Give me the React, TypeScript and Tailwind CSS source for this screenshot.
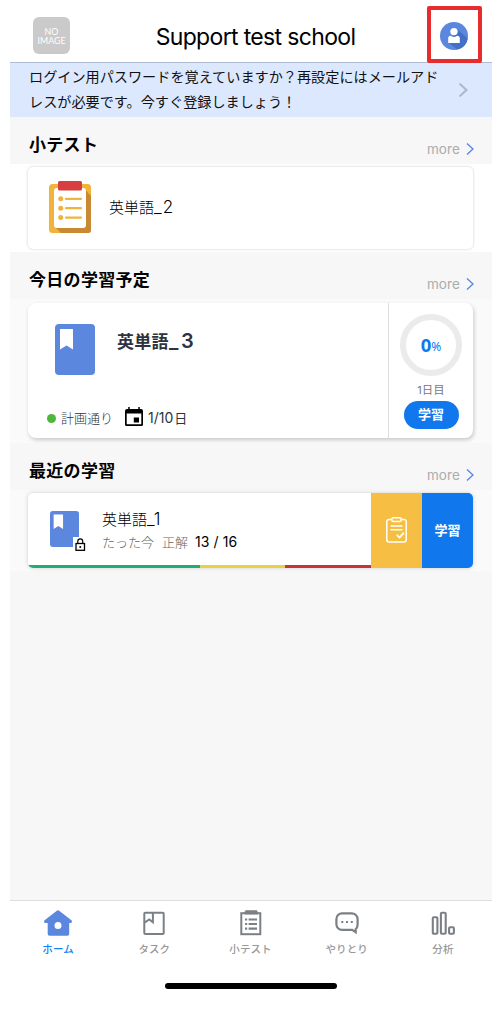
import { ReactNode } from 'react';

interface SectionHeaderProps {
  title: string;
  className?: string;
}

function ChevronRight({ className }: { className?: string }) {
  return (
    <svg viewBox="0 0 8 12" className={className} fill="none" stroke="currentColor">
      <path d="M1 .5 7 6 1 11.5" />
    </svg>
  );
}

function SectionHeader({ title, className = '' }: SectionHeaderProps) {
  return (
    <div className={`flex items-start justify-between bg-[#f7f7f7] pl-[19px] pr-[18px] ${className}`}>
      <h2 className="mt-[15px] text-[17px] leading-[26px] font-bold tracking-[0.3px] text-black">{title}</h2>
      <a className="mt-[22px] flex items-center text-[13.5px] leading-5 tracking-[0.1px] text-[#acacac]">
        more
        <ChevronRight className="ml-[6px] h-3 w-2 stroke-[1.4] text-[#5b87e0]" />
      </a>
    </div>
  );
}

function BookIcon({ className }: { className?: string }) {
  return (
    <svg viewBox="0 0 40 50" preserveAspectRatio="none" className={className}>
      <rect width="40" height="50" rx="4" fill="#5c87df" />
      <path d="M5 5h13v20l-6.5-4L5 25z" fill="#fff" />
    </svg>
  );
}

function QuizIcon() {
  return (
    <svg viewBox="0 0 42 52" className="-mt-[2px] h-[52px] w-[42px]">
      <rect y="3" width="42" height="49" rx="3.5" fill="#f2b33b" />
      <path d="m36.5 9 5.5 6v34a3 3 0 0 1-3 3H12l-5-5h28z" fill="#c98933" />
      <rect x="5" y="7" width="32" height="40" rx="3" fill="#fff" />
      <rect x="9" y="0" width="24" height="9.5" rx="1.5" fill="#d63e3f" />
      <g fill="#f2b33b">
        <circle cx="11.7" cy="17.8" r="2.5" />
        <circle cx="11.7" cy="27.2" r="2.5" />
        <circle cx="11.7" cy="36.6" r="2.5" />
      </g>
      <path d="M17 17.8h15M17 27.2h15M17 36.6h15" stroke="#f2b33b" strokeWidth="2.2" strokeLinecap="round" />
    </svg>
  );
}

function AvatarIcon() {
  return (
    <svg viewBox="0 0 28 28" className="size-7">
      <circle cx="14" cy="14" r="14" fill="#5c87df" />
      <path d="m17 7 10.7 9.4A14 14 0 0 1 17.2 27.6L8.5 20.5z" fill="#436fc8" />
      <circle cx="14" cy="9.6" r="3.7" fill="#fff" />
      <path d="M8.2 20.9v-4.6c0-1.5 1-2.5 2.4-2.5 1.8 1.5 5 1.5 6.8 0 1.4 0 2.4 1 2.4 2.5v4.6z" fill="#fff" />
    </svg>
  );
}

function LockIcon() {
  return (
    <svg viewBox="0 0 14 15" className="absolute -right-2 -bottom-[5px] h-[15px] w-[14px]">
      <path d="M2 0h6v12H2z" fill="#fff" transform="translate(-2)" />
      <rect x="3" y="6.5" width="8.5" height="6.8" fill="#fff" stroke="#000" strokeWidth="1.3" />
      <path d="M4.8 6.5V4.3a2.45 2.45 0 0 1 4.9 0v2.2" fill="none" stroke="#000" strokeWidth="1.2" />
      <circle cx="7.25" cy="9.9" r="1" />
    </svg>
  );
}

function CalendarIcon() {
  return (
    <svg viewBox="0 0 18 20" className="-mt-[2px] h-5 w-[18px]">
      <path
        d="M2 2h14a2 2 0 0 1 2 2v13.5a1.5 1.5 0 0 1-1.5 1.5h-15A1.5 1.5 0 0 1 0 17.5V4a2 2 0 0 1 2-2zM1.7 6.6v10.7h14.6V6.6z"
        fillRule="evenodd"
      />
      <path d="M3.2 0h1.5v3H3.2zM13.3 0h1.5v3h-1.5zM8.8 10.5h5.2v5H8.8z" />
    </svg>
  );
}

function ReportIcon() {
  return (
    <svg
      viewBox="0 0 21 26"
      className="-mt-[2px] h-[26px] w-[21px]"
      fill="none"
      stroke="#fff"
      strokeWidth="1.5"
      strokeLinecap="round"
      strokeLinejoin="round"
    >
      <path d="M5.5 2.5H3A2.2 2.2 0 0 0 .8 4.7v18.1A2.2 2.2 0 0 0 3 25h15a2.2 2.2 0 0 0 2.2-2.2V4.7A2.2 2.2 0 0 0 18 2.5h-2.5" />
      <rect x="5.7" y=".8" width="9.6" height="3.6" rx="1.6" />
      <path d="M5 9h11M5 12.7h11" />
      <path d="m11.3 18.3 2.2 2.3 3.8-4.3" strokeWidth="1.9" />
    </svg>
  );
}

const tabs: { label: string; icon: ReactNode; active?: boolean }[] = [
  {
    label: 'ホーム',
    active: true,
    icon: (
      <path
        d="M12.8 1.7a2 2 0 0 1 2.4 0l12.2 9.6c1 .8.6 2.6-.7 2.6h-1.5V25a1.8 1.8 0 0 1-1.8 1.8H5.5A1.8 1.8 0 0 1 3.7 25V13.9H1.3c-1.3 0-1.7-1.8-.7-2.6zM14 13a3.5 3.5 0 1 0 0 7 3.5 3.5 0 0 0 0-7z"
        fill="#5c87df"
      />
    ),
  },
  {
    label: 'タスク',
    icon: (
      <g fill="none" stroke="#7b8086" strokeWidth="2">
        <rect x="4.3" y="3.7" width="19.4" height="21.4" rx="1" />
        <path d="M12.9 4v9.2l-3.6-2.7-4.4 2.8" strokeWidth="2" />
      </g>
    ),
  },
  {
    label: '小テスト',
    icon: (
      <g fill="none" stroke="#7b8086" strokeWidth="2">
        <rect x="4.3" y="4.2" width="19" height="21" />
        <path d="M7.5 4h13.4M8.3 2.8h11.8" strokeWidth="3.2" />
        <path d="M8 10.5h2.2m1.4 0h8.4M8 15h2.2m1.4 0h8.4M8 19.6h2.2m1.4 0h8.4" strokeWidth="2.1" />
      </g>
    ),
  },
  {
    label: 'やりとり',
    icon: (
      <g>
        <path
          d="M9 4.3h9.6a6 6 0 0 1 6 6v5.3c0 2-.6 3.4-1.9 4.4v3.2l-3.5-2.4H9a5.6 5.6 0 0 1-5.6-5.6V9.9A5.6 5.6 0 0 1 9 4.3z"
          fill="none"
          stroke="#7b8086"
          strokeWidth="2.2"
        />
        <path d="M8.3 11.9h2v2h-2zM13 11.9h2v2h-2zM17.8 11.9h2v2h-2z" fill="#7b8086" />
      </g>
    ),
  },
  {
    label: '分析',
    icon: (
      <g fill="none" stroke="#7b8086" strokeWidth="2.1">
        <rect x="3.8" y="8.3" width="4.6" height="16.4" rx="1" />
        <rect x="11.9" y="3.8" width="4.8" height="20.9" rx="1" />
        <rect x="20.1" y="18.2" width="4.8" height="6.5" rx="1" />
      </g>
    ),
  },
];

function TabBar() {
  return (
    <nav className="flex h-[76px] border-t border-[#dedede] bg-white pr-[1px]">
      {tabs.map((tab) => (
        <div key={tab.label} className="flex flex-1 flex-col items-center">
          <svg viewBox="0 0 28 28" className="mt-2 size-7">
            {tab.icon}
          </svg>
          <span
            className={`mt-[5px] text-[10.5px] leading-4 font-medium tracking-[0.1px] ${
              tab.active ? 'text-[#1483f5]' : 'text-[#999]'
            }`}
          >
            {tab.label}
          </span>
        </div>
      ))}
    </nav>
  );
}

export default function App() {
  return (
    <div className="h-[1011px] w-[500px] overflow-hidden bg-white pl-[10px] font-[Inter,'Noto_Sans_CJK_JP',sans-serif] whitespace-nowrap text-black">
      <div className="flex h-full w-[482px] flex-col">
        <header className="flex h-[63px] items-start justify-between border-b border-[#aebbd1] pl-[23px]">
          <div className="mt-[17px] flex h-[37px] w-[37px] flex-col items-center justify-center rounded-md bg-[#cacaca] font-[Lato,sans-serif] text-[8.8px] leading-[9px] text-white">
            <span>NO</span>
            <span>IMAGE</span>
          </div>
          <h1 className="mt-[23px] ml-[14px] text-[23px] leading-7 tracking-[-0.66px]">Support test school</h1>
          <div className="relative z-10 mt-[6px] mr-[10px] flex h-[57px] w-[55px] shrink-0 items-center justify-center rounded-xs border-4 border-[#e72c2e] pt-[2px]">
            <AvatarIcon />
          </div>
        </header>

        <div className="flex h-[54px] items-center justify-between bg-[#dce8fe] pr-6 pl-[19px]">
          <p className="-mt-[2px] text-[14.15px] leading-[25px] text-[#111]">
            ログイン用パスワードを覚えていますか？再設定にはメールアド
            <br />
            レスが必要です。今すぐ登録しましょう！
          </p>
          <ChevronRight className="h-[14px] w-[10px] stroke-[1.8] text-[#adb8cb]" />
        </div>

        <main className="flex-1 bg-[#f7f7f7]">
          <SectionHeader title="小テスト" className="h-[47px]" />
          <div className="h-[88px] bg-white pt-[3px] pr-[19px] pl-[18px]">
            <div className="flex h-[82px] items-center rounded-[5px] bg-white pl-[21px] shadow-[0_0_3px_rgba(0,0,0,0.2)]">
              <QuizIcon />
              <span className="ml-[18px] text-[15px] font-light">
                英単語<span className="text-[17px] tracking-[1px]">_2</span>
              </span>
            </div>
          </div>

          <SectionHeader title="今日の学習予定" className="h-[47px]" />
          <div className="h-[144px] bg-[#fafafa] pt-[4px] pr-[19px] pl-[18px]">
            <div className="flex h-[135px] rounded-lg bg-white text-[#2d3440] shadow-[1px_2px_4px_rgba(0,0,0,0.2)]">
              <div className="flex w-[361px] flex-col justify-between border-r border-[#dedede] pt-[21px] pb-[10px] pl-[19px]">
                <div className="flex pl-2">
                  <BookIcon className="h-[51px] w-10" />
                  <h3 className="mt-[4px] ml-[22px] text-[17px] leading-[26px] font-bold tracking-[0.3px]">
                    英単語
                    <span className="text-[20px] font-semibold tracking-[3.5px]">_3</span>
                  </h3>
                </div>
                <div className="flex items-center text-[13px] leading-5 font-light">
                  <span className="mr-[5px] size-[9px] rounded-full bg-[#4cb73a]" />
                  <span>計画通り</span>
                  <span className="mr-[5px] ml-[12px] text-black">
                    <CalendarIcon />
                  </span>
                  <span className="font-normal">
                    <span className="text-[14px]">1/10</span>
                    <span className="ml-px">日</span>
                  </span>
                </div>
              </div>
              <div className="flex flex-1 flex-col items-center pt-[11px]">
                <div className="flex size-[62px] items-center justify-center rounded-full border-[6px] border-[#ebebeb] text-[#1078ec]">
                  <span className="font-['Noto_Sans',sans-serif] text-[18.5px] font-bold">0</span>
                  <span className="mt-1 font-['Noto_Sans',sans-serif] text-[12px]">%</span>
                </div>
                <span className="mt-[6px] text-[11px] leading-4 tracking-[0.3px] text-[#777]">1日目</span>
                <button className="mt-[3px] h-7 w-[55px] rounded-full bg-[#1078ec] text-[13px] font-bold text-white">
                  学習
                </button>
              </div>
            </div>
          </div>

          <SectionHeader title="最近の学習" className="h-[47px]" />
          <div className="h-[81px] bg-[#fafafa] pt-[3px] pr-[19px] pl-[18px]">
            <div className="flex h-[75px] overflow-hidden rounded-[5px] bg-white shadow-[0_0_4px_rgba(0,0,0,0.18)]">
              <div className="flex w-[343px] flex-col justify-between">
                <div className="flex pt-[18px] pl-[22px]">
                  <div className="relative h-9 w-[29px]">
                    <BookIcon className="h-9 w-[29px]" />
                    <LockIcon />
                  </div>
                  <div className="-mt-[3px] ml-[23px] flex flex-col">
                    <span className="text-[15px] leading-[23px] font-light">
                      英単語<span className="text-[17px] tracking-[1px]">_1</span>
                    </span>
                    <span className="flex text-[13px] leading-[22px] font-light text-[#666]">
                      たった今
                      <span className="ml-2">正解</span>
                      <span className="ml-[7px] text-[14px] font-normal tracking-[0.1px] text-black">13 / 16</span>
                    </span>
                  </div>
                </div>
                <div className="flex h-[3px]">
                  <span className="w-[172px] bg-[#1eae78]" />
                  <span className="w-[85px] bg-[#e8d33f]" />
                  <span className="flex-1 bg-[#c6343a]" />
                </div>
              </div>
              <div className="flex w-[51px] items-center justify-center bg-[#f6bf43]">
                <ReportIcon />
              </div>
              <button className="flex-1 bg-[#1078ec] text-[13px] font-bold text-white">学習</button>
            </div>
          </div>
        </main>

        <TabBar />
        <div className="flex h-[35px] justify-center bg-white">
          <span className="mt-[7px] h-[6px] w-[172px] rounded-full bg-black" />
        </div>
      </div>
    </div>
  );
}
